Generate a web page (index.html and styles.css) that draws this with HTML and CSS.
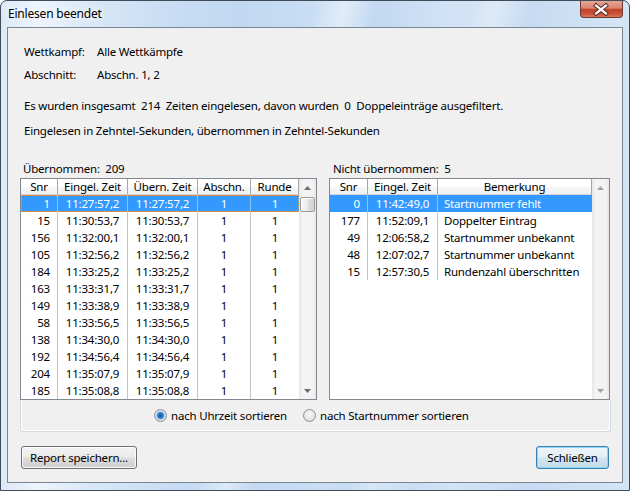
FILE: index.html
```html
<!DOCTYPE html>
<html lang="de">
<head>
<meta charset="utf-8">
<title>Einlesen beendet</title>
<link rel="stylesheet" href="styles.css">
</head>
<body>
<div class="window">
  <div class="titlebar">
    <span class="title">Einlesen beendet</span>
    <span class="close">
      <svg width="43" height="17" viewBox="0 0 43 17">
        <path d="M16.5 4.5 L26.5 12.5 M26.5 4.5 L16.5 12.5" stroke="#5a2a22" stroke-width="4.4" stroke-linecap="square" fill="none"/>
        <path d="M16.5 4.5 L26.5 12.5 M26.5 4.5 L16.5 12.5" stroke="#ffffff" stroke-width="2.4" stroke-linecap="square" fill="none"/>
      </svg>
    </span>
  </div>
  <div class="client">
    <div class="info">
      <div class="kv l1"><span class="k">Wettkampf:</span><span>Alle Wettkämpfe</span></div>
      <div class="kv l2"><span class="k">Abschnitt:</span><span>Abschn. 1, 2</span></div>
      <div class="line l3">Es wurden insgesamt  214  Zeiten eingelesen, davon wurden  0  Doppeleinträge ausgefiltert.</div>
      <div class="line l4">Eingelesen in Zehntel-Sekunden, übernommen in Zehntel-Sekunden</div>
    </div>

    <div class="lists">
      <div class="col col-left">
        <div class="cap">Übernommen:  209</div>
        <div class="list">
          <div class="grid left">
            <div class="row head">
              <div class="c">Snr</div><div class="c">Eingel. Zeit</div><div class="c">Übern. Zeit</div><div class="c">Abschn.</div><div class="c">Runde</div>
            </div>
            <div class="row sel focus"><div class="c r">1</div><div class="c">11:27:57,2</div><div class="c">11:27:57,2</div><div class="c">1</div><div class="c">1</div></div>
            <div class="row"><div class="c r">15</div><div class="c">11:30:53,7</div><div class="c">11:30:53,7</div><div class="c">1</div><div class="c">1</div></div>
            <div class="row"><div class="c r">156</div><div class="c">11:32:00,1</div><div class="c">11:32:00,1</div><div class="c">1</div><div class="c">1</div></div>
            <div class="row"><div class="c r">105</div><div class="c">11:32:56,2</div><div class="c">11:32:56,2</div><div class="c">1</div><div class="c">1</div></div>
            <div class="row"><div class="c r">184</div><div class="c">11:33:25,2</div><div class="c">11:33:25,2</div><div class="c">1</div><div class="c">1</div></div>
            <div class="row"><div class="c r">163</div><div class="c">11:33:31,7</div><div class="c">11:33:31,7</div><div class="c">1</div><div class="c">1</div></div>
            <div class="row"><div class="c r">149</div><div class="c">11:33:38,9</div><div class="c">11:33:38,9</div><div class="c">1</div><div class="c">1</div></div>
            <div class="row"><div class="c r">58</div><div class="c">11:33:56,5</div><div class="c">11:33:56,5</div><div class="c">1</div><div class="c">1</div></div>
            <div class="row"><div class="c r">138</div><div class="c">11:34:30,0</div><div class="c">11:34:30,0</div><div class="c">1</div><div class="c">1</div></div>
            <div class="row"><div class="c r">192</div><div class="c">11:34:56,4</div><div class="c">11:34:56,4</div><div class="c">1</div><div class="c">1</div></div>
            <div class="row"><div class="c r">204</div><div class="c">11:35:07,9</div><div class="c">11:35:07,9</div><div class="c">1</div><div class="c">1</div></div>
            <div class="row"><div class="c r">185</div><div class="c">11:35:08,8</div><div class="c">11:35:08,8</div><div class="c">1</div><div class="c">1</div></div>
          </div>
          <div class="sb">
            <div class="arrow"><svg width="7" height="4" viewBox="0 0 7 4"><path d="M0 4 L3.5 0 L7 4 Z" fill="#6d6d6d"/></svg></div>
            <div class="track"><div class="thumb"></div></div>
            <div class="arrow"><svg width="7" height="4" viewBox="0 0 7 4"><path d="M0 0 L3.5 4 L7 0 Z" fill="#6d6d6d"/></svg></div>
          </div>
        </div>
      </div>

      <div class="col col-right">
        <div class="cap">Nicht übernommen:  5</div>
        <div class="list">
          <div class="grid right">
            <div class="row head">
              <div class="c">Snr</div><div class="c">Eingel. Zeit</div><div class="c">Bemerkung</div>
            </div>
            <div class="row sel"><div class="c r">0</div><div class="c">11:42:49,0</div><div class="c lft">Startnummer fehlt</div></div>
            <div class="row"><div class="c r">177</div><div class="c">11:52:09,1</div><div class="c lft">Doppelter Eintrag</div></div>
            <div class="row"><div class="c r">49</div><div class="c">12:06:58,2</div><div class="c lft">Startnummer unbekannt</div></div>
            <div class="row"><div class="c r">48</div><div class="c">12:07:02,7</div><div class="c lft">Startnummer unbekannt</div></div>
            <div class="row"><div class="c r">15</div><div class="c">12:57:30,5</div><div class="c lft">Rundenzahl überschritten</div></div>
          </div>
          <div class="sb">
            <div class="arrow"><svg width="7" height="4" viewBox="0 0 7 4"><path d="M0 4 L3.5 0 L7 4 Z" fill="#a3a3a3"/></svg></div>
            <div class="track"></div>
            <div class="arrow"><svg width="7" height="4" viewBox="0 0 7 4"><path d="M0 0 L3.5 4 L7 0 Z" fill="#a3a3a3"/></svg></div>
          </div>
        </div>
      </div>
    </div>

    <div class="panel">
      <label class="opt opt1"><span class="radio on"></span><span>nach Uhrzeit sortieren</span></label>
      <label class="opt"><span class="radio"></span><span>nach Startnummer sortieren</span></label>
    </div>

    <div class="buttons">
      <span class="btn report">Report speichern...</span>
      <span class="btn default">Schließen</span>
    </div>
  </div>
</div>
</body>
</html>
```

FILE: styles.css
```css
html, body {
  margin: 0;
  padding: 0;
}
body {
  width: 630px;
  height: 491px;
  overflow: hidden;
  background: #ffffff;
  font-family: "Noto Sans", "Open Sans", "DejaVu Sans", sans-serif;
  font-size: 11.5px;
  letter-spacing: -0.2px;
  color: #000;
}
.window {
  box-sizing: border-box;
  width: 630px;
  height: 491px;
  border: 1px solid #3f4b57;
  border-radius: 7px 7px 0 0;
  padding: 0 6px 7px 6px;
  display: flex;
  flex-direction: column;
  background:
    linear-gradient(104deg, rgba(255,255,255,0) 0%, rgba(255,255,255,0) 42%, rgba(255,255,255,0.45) 46%, rgba(255,255,255,0) 50%, rgba(255,255,255,0) 62%, rgba(255,255,255,0.35) 66%, rgba(255,255,255,0) 71%, rgba(255,255,255,0) 100%),
    linear-gradient(90deg, #dce9f7 0%, #eef5fc 6%, #d9e8f7 14%, #c9def4 26%, #c1d8f1 38%, #cadff4 52%, #c3d9f1 60%, #d2e3f6 72%, #c6dbf2 84%, #d5e5f6 100%);
}
.titlebar {
  height: 26px;
  display: flex;
  align-items: flex-start;
}
.title {
  line-height: 25px;
  padding-left: 1px;
  font-size: 12px;
  letter-spacing: -0.2px;
  text-shadow: 0 0 6px #fff, 0 0 10px #fff;
}
.close {
  margin-left: auto;
  width: 43px;
  height: 17px;
  box-sizing: border-box;
  border: 1px solid #6b3a32;
  border-top: none;
  border-radius: 0 0 4px 4px;
  background: linear-gradient(180deg, #e6a796 0%, #d98370 45%, #c3412a 52%, #cb5238 80%, #dc775c 100%);
  display: flex;
}
.close svg {
  margin-left: -1px;
  display: block;
}
.client {
  flex: 1;
  border: 1px solid #7a8793;
  background: #f0f0f0;
  padding: 16px 11px 12px 12px;
  display: flex;
  flex-direction: column;
}
.info {
  margin-left: 4px;
}
.kv {
  display: flex;
  height: 16px;
  line-height: 16px;
}
.kv .k {
  width: 73px;
}
.line {
  height: 16px;
  line-height: 16px;
  white-space: pre;
}
.l2 { margin-top: 7px; }
.l3 { margin-top: 15px; }
.l4 { margin-top: 9px; }

.lists {
  margin-top: 22px;
  display: flex;
  gap: 12px;
}
.col-left { width: 297px; }
.col-right { width: 281px; }
.cap {
  height: 17px;
  line-height: 16px;
  padding-left: 3px;
  white-space: pre;
}
.col-right .cap { padding-left: 4px; }
.list {
  box-sizing: border-box;
  height: 222px;
  border: 1px solid #828790;
  background: #fff;
  display: flex;
}
.grid {
  flex: 1;
  display: flex;
  flex-direction: column;
}
.row {
  display: grid;
  height: 17px;
  line-height: 17px;
  position: relative;
}
.left .row { grid-template-columns: 37px 70px 70px 53px 48px; }
.right .row { grid-template-columns: 38px 70px 154px; }
.c {
  box-sizing: border-box;
  border-right: 1px solid #c4c4c4;
  text-align: center;
  white-space: nowrap;
  overflow: hidden;
}
.row:not(.head) .c:last-child { border-right: none; }
.c.r { text-align: right; padding-right: 7px; }
.c.lft { text-align: left; padding-left: 6px; }
.row.head {
  height: 16px;
  line-height: 15px;
  background: linear-gradient(180deg, #ffffff 0%, #ffffff 45%, #f4f5f7 55%, #eef0f3 100%);
}
.row.head .c {
  border-right: 1px solid #a5a9ae;
  border-bottom: 1px solid #d5d5d5;
}
.row.sel {
  background: #3399ff;
  color: #fff;
}
.row.sel .c { border-right-color: #8cc3fa; }
.row.sel .c:last-child { border-right: none; }
.row.focus::after {
  content: "";
  position: absolute;
  left: 0;
  top: 0;
  right: 0;
  bottom: 0;
  border: 1px dotted #f0a050;
}
.sb {
  width: 17px;
  display: flex;
  flex-direction: column;
  background: linear-gradient(90deg, #e6e6e6 0%, #f3f3f3 20%, #f3f3f3 80%, #e6e6e6 100%);
}
.arrow {
  height: 17px;
  display: flex;
  align-items: center;
  justify-content: center;
}
.track {
  flex: 1;
}
.thumb {
  margin: 1px 1px 0 1px;
  height: 15px;
  box-sizing: border-box;
  border: 1px solid #9a9a9a;
  border-radius: 2px;
  background: linear-gradient(90deg, #f6f6f6 0%, #ececec 50%, #dedede 51%, #d4d4d4 100%);
  box-shadow: inset 1px 1px 0 #fff;
}
.panel {
  box-sizing: border-box;
  height: 32px;
  border: 1px solid #d5d8dc;
  border-top: none;
  border-radius: 0 0 3px 3px;
  box-shadow: inset 1px 0 0 #fff, inset -1px -1px 0 #fff;
  display: flex;
  align-items: center;
  padding-left: 133px;
  padding-bottom: 1px;
}
.opt {
  display: flex;
  align-items: center;
  gap: 4px;
}
.opt1 { width: 149px; }
.radio {
  box-sizing: border-box;
  width: 13px;
  height: 13px;
  border-radius: 50%;
  border: 1px solid #8f8f8f;
  background: radial-gradient(circle at 50% 40%, #f8f8f8 0, #e4e4e4 60%, #cfcfcf 100%);
}
.radio.on {
  background: radial-gradient(circle at 50% 50%, #1b5aa0 0, #1f68b2 1.5px, #3f8ed8 3px, #9ccbf1 4px, #e4e4e4 4.8px, #cfcfcf 100%);
}
.buttons {
  margin-top: 14px;
  display: flex;
  justify-content: space-between;
  padding: 0 2px 0 1px;
}
.btn {
  box-sizing: border-box;
  height: 23px;
  line-height: 21px;
  border: 1px solid #707070;
  border-radius: 3px;
  text-align: center;
  background: linear-gradient(180deg, #f2f2f2 0%, #ebebeb 48%, #dddddd 52%, #cfcfcf 100%);
  box-shadow: inset 0 0 0 1px rgba(255,255,255,0.8);
}
.report { width: 116px; }
.default {
  width: 73px;
  border-color: #3c7fb1;
  background: linear-gradient(180deg, #eef5f9 0%, #e3eef4 48%, #d2e5ef 52%, #c3dbe8 100%);
  box-shadow: inset 0 0 0 1px #8fd6f5;
}
```
